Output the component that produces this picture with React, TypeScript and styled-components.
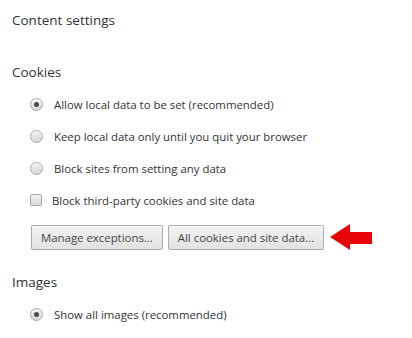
import React from 'react'
import styled, { createGlobalStyle } from 'styled-components'

const GlobalStyle = createGlobalStyle`
  html, body {
    margin: 0;
    padding: 0;
    background: #fff;
  }
  body {
    font-family: "Open Sans", "Liberation Sans", sans-serif;
    color: #333;
  }
`

const cookieOptions = [
  { kind: 'radio', label: 'Allow local data to be set (recommended)', checked: true },
  { kind: 'radio', label: 'Keep local data only until you quit your browser', checked: false },
  { kind: 'radio', label: 'Block sites from setting any data', checked: false },
  { kind: 'checkbox', label: 'Block third-party cookies and site data', checked: false },
]

const imageOptions = [
  { kind: 'radio', label: 'Show all images (recommended)', checked: true },
  { kind: 'radio', label: 'Do not show any images', checked: false },
]

const App = () => {
  return (
    <>
      <GlobalStyle />
      <Page>
        <Title>Content settings</Title>

        <Section>
          <SectionTitle>Cookies</SectionTitle>
          <Options>
            {cookieOptions.map((o) => (
              <OptionRow key={o.label}>
                {o.kind === 'radio' ? <Radio $checked={o.checked} /> : <Checkbox />}
                <Label $box={o.kind === 'checkbox'}>{o.label}</Label>
              </OptionRow>
            ))}
            <ButtonRow>
              <Button>Manage exceptions...</Button>
              <Button>All cookies and site data...</Button>
              <Arrow width="43" height="27" viewBox="0 0 43 27">
                <polygon points="0,13 20,0 20,8 42,8 42,20 20,20 20,26" fill="#e8050a" />
              </Arrow>
            </ButtonRow>
          </Options>
        </Section>

        <Section $images>
          <SectionTitle>Images</SectionTitle>
          <Options>
            {imageOptions.map((o) => (
              <OptionRow key={o.label}>
                <Radio $checked={o.checked} />
                <Label>{o.label}</Label>
              </OptionRow>
            ))}
          </Options>
        </Section>
      </Page>
    </>
  )
}

export const Page = styled.div`
  padding: 10px 12px 0 12px;
  height: 338px;
  box-sizing: border-box;
  overflow: hidden;
`
export const Title = styled.h1`
  margin: 0;
  font-size: 13.5px;
  font-weight: 400;
  line-height: 20px;
  color: #333;
`
export const Section = styled.div<{ $images?: boolean }>`
  margin-top: ${(p) => (p.$images ? '21px' : '32px')};
`
export const SectionTitle = styled.h2`
  margin: 0;
  font-size: 13.5px;
  font-weight: 400;
  line-height: 20px;
  color: #333;
`
export const Options = styled.div`
  padding-left: 18px;
  margin-top: 6px;
`
export const OptionRow = styled.div`
  display: flex;
  align-items: center;
  height: 32px;
`
export const Radio = styled.span<{ $checked?: boolean }>`
  position: relative;
  flex: none;
  width: 13px;
  height: 13px;
  box-sizing: border-box;
  border-radius: 50%;
  border: 1px solid #a9a9a9;
  background: linear-gradient(#f2f2f2, #d8d8d8);
  box-shadow: inset 0 1px 1px #fff;
  &::after {
    content: '';
    display: ${(p) => (p.$checked ? 'block' : 'none')};
    position: absolute;
    left: 3px;
    top: 3px;
    width: 5px;
    height: 5px;
    border-radius: 50%;
    background: #4a4a4a;
  }
`
export const Checkbox = styled.span`
  flex: none;
  width: 12px;
  height: 12px;
  box-sizing: border-box;
  border-radius: 2px;
  border: 1px solid #a9a9a9;
  background: linear-gradient(#f2f2f2, #dadada);
`
export const Label = styled.span<{ $box?: boolean }>`
  margin-left: ${(p) => (p.$box ? '10px' : '11px')};
  font-size: 11.4px;
  color: #333;
  white-space: nowrap;
`
export const ButtonRow = styled.div`
  display: flex;
  align-items: center;
  gap: 5px;
  margin-top: 8px;
  margin-left: 1px;
`
export const Button = styled.button`
  height: 25px;
  padding: 0 9px;
  font-family: "Open Sans", "Liberation Sans", sans-serif;
  font-size: 11.4px;
  color: #444;
  border: 1px solid #acacac;
  border-radius: 2px;
  background: linear-gradient(#f3f3f3, #e2e2e2);
  box-shadow: inset 0 1px 0 #fff;
  white-space: nowrap;
`
export const Arrow = styled.svg`
  flex: none;
  margin-left: 1px;
`

export default App
